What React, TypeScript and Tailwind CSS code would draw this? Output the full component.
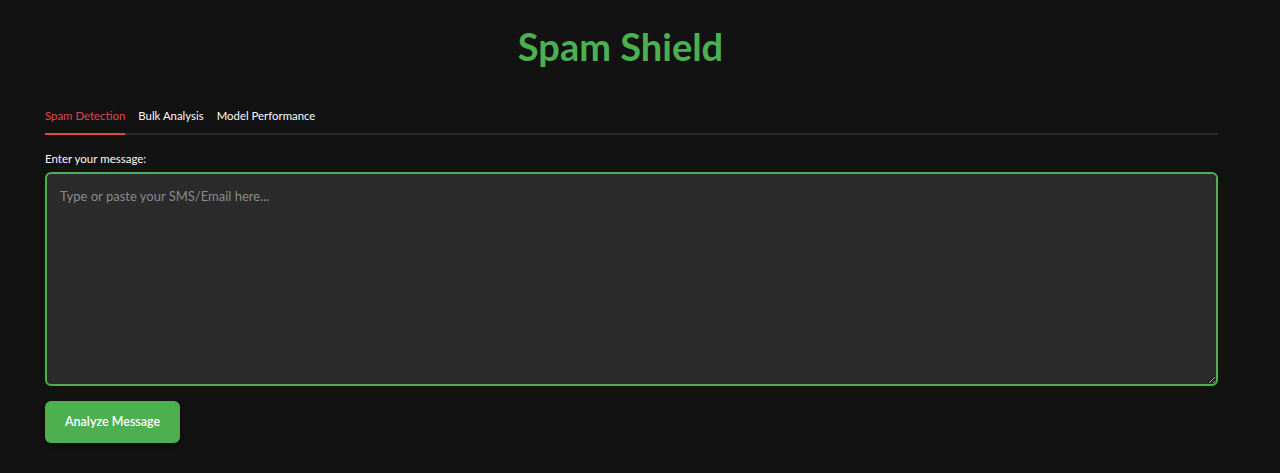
import { useState } from "react";

const tabs = ["Spam Detection", "Bulk Analysis", "Model Performance"];

export default function App() {
  const [active, setActive] = useState(0);
  const [text, setText] = useState("");

  return (
    <div className="min-h-screen bg-[#121212] font-['Lato',sans-serif] text-[#fafafa]">
      <div className="flex w-full flex-col pl-[45px] pr-[62px] pt-[24px]">
        <h1 className="pr-[22px] text-center text-[38px] font-bold leading-[44px] text-[#4caf50]">
          Spam Shield
        </h1>

        <div className="mt-[36px] flex gap-[13px] border-b-2 border-[#2a2a2a]">
          {tabs.map((t, i) => (
            <button
              key={t}
              onClick={() => setActive(i)}
              className={`-mb-[2px] h-[31px] border-b-2 pb-[6px] text-[11.4px] leading-none ${
                i === active
                  ? "border-[#e0464b] text-[#e0464b]"
                  : "border-transparent text-[#fafafa]"
              }`}
            >
              {t}
            </button>
          ))}
        </div>

        <label className="mt-[17px] text-[11.5px] leading-[14px] text-[#fafafa]">
          Enter your message:
        </label>

        <textarea
          value={text}
          onChange={(e) => setText(e.target.value)}
          placeholder="Type or paste your SMS/Email here..."
          className="mt-[6px] h-[214px] w-full resize-y rounded-[6px] border-2 border-[#4caf50] bg-[#2b2b2b] px-[13px] py-[13px] text-[13px] text-[#fafafa] placeholder:text-[#8a8a8a] focus:outline-none"
        />

        <div className="mt-[15px]">
          <button className="h-[42px] rounded-[6px] bg-[#4caf50] px-[20px] text-[12.5px] font-semibold text-white shadow-[0_3px_4px_rgba(0,0,0,0.5)]">
            Analyze Message
          </button>
        </div>
      </div>
    </div>
  );
}
